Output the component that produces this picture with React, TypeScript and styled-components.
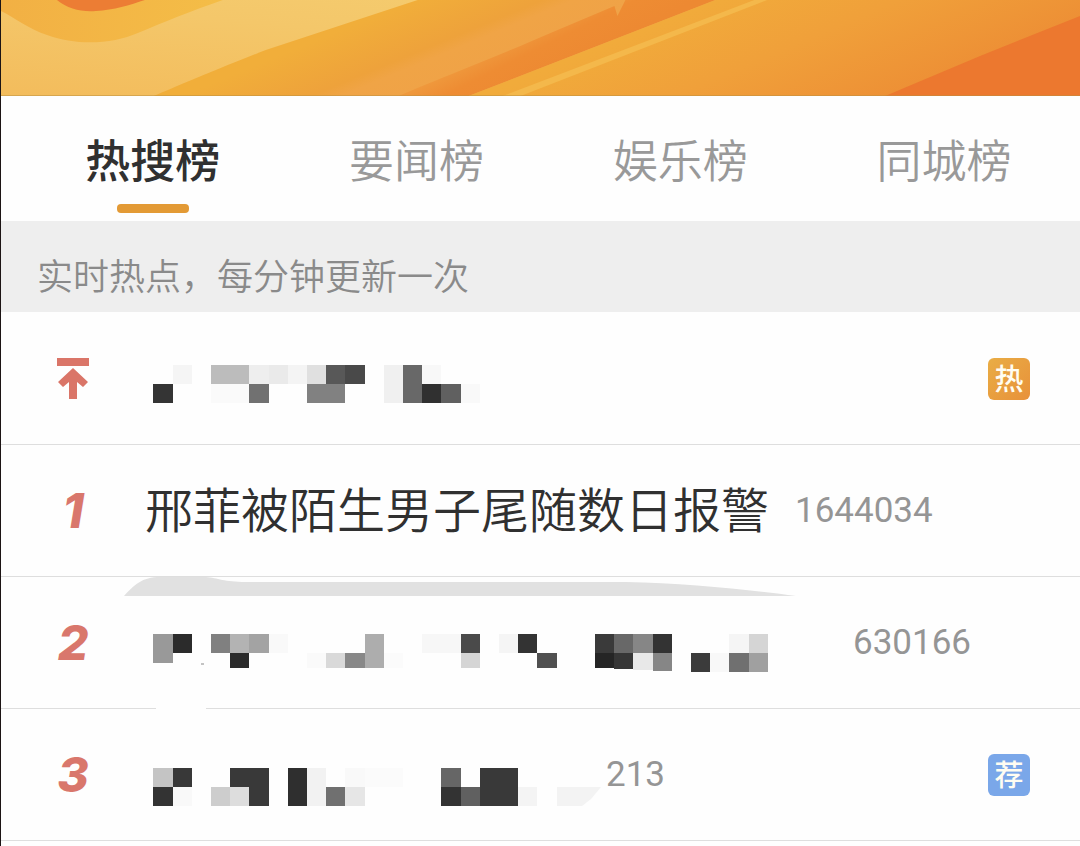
import React, { useState } from "react";
import styled, { createGlobalStyle } from "styled-components";

const GlobalStyle = createGlobalStyle`
  *, *::before, *::after { box-sizing: border-box; }
  body {
    margin: 0;
    background: #fefefe;
    font-family: Roboto, "Noto Sans CJK SC", sans-serif;
  }
`;

const Page = styled.main`
  min-height: 100vh;
  border-left: 1px solid #1c1414;
  overflow: hidden;
`;

const Banner = styled.svg`
  display: block;
  width: 100%;
  height: 96px;
`;

const TabBar = styled.nav`
  display: flex;
  height: 125px;
  padding: 0 4px 0 20px;
`;

const Tab = styled.button<{ $active: boolean }>`
  flex: 1;
  display: flex;
  flex-direction: column;
  align-items: center;
  gap: 12px;
  padding: 30px 0 0;
  border: 0;
  background: none;
  font-family: "Noto Sans CJK SC", sans-serif;
  font-size: 45px;
  line-height: 66px;
  font-weight: ${(p) => (p.$active ? 500 : 350)};
  color: ${(p) => (p.$active ? "#303030" : "#999999")};
  cursor: pointer;

  &::after {
    content: "";
    width: 72px;
    height: 9px;
    border-radius: 4px;
    background: ${(p) => (p.$active ? "#e39a35" : "transparent")};
  }
`;

const Notice = styled.p`
  margin: 0;
  padding: 26px 36px 11px;
  background: #eeeeee;
  color: #8a8a8a;
  font-family: "Noto Sans CJK SC", sans-serif;
  font-size: 36px;
  line-height: 54px;
  font-weight: 350;
`;

const List = styled.ol`
  margin: 0;
  padding: 0;
  list-style: none;
  border-bottom: 1px solid #dedede;
`;

const Row = styled.li`
  display: flex;
  align-items: center;
  height: 132px;
  padding-right: 50px;
  border-top: 1px solid #dedede;

  &:first-child { border-top-color: transparent; }
`;

const Rank = styled.span`
  flex: none;
  display: flex;
  justify-content: center;
  width: 144px;
  color: #d9776c;
  font-family: Inter, sans-serif;
  font-size: 48px;
  line-height: 56px;
  font-style: italic;
  font-weight: 800;
`;

const TopIcon = styled.svg`
  display: block;
  width: 32px;
  height: 41px;
`;

const Title = styled.a`
  display: block;
  padding-bottom: 8px;
  color: #303030;
  font-family: "Noto Sans CJK SC", sans-serif;
  font-size: 48px;
  line-height: 70px;
  font-weight: 350;
  text-decoration: none;
  white-space: nowrap;
`;

const Mosaic = styled.svg`
  display: block;
  height: 132px;
  overflow: visible;
`;

const Count = styled.span`
  margin-left: 26px;
  color: #959595;
  font-family: Roboto, sans-serif;
  font-size: 35px;
  line-height: 42px;
  font-weight: 400;
`;

const Badge = styled.span<{ $kind: "hot" | "pick" }>`
  flex: none;
  width: 42px;
  height: 42px;
  margin-left: auto;
  border-radius: 6px;
  background: ${(p) =>
    p.$kind === "hot" ? "linear-gradient(135deg, #e9ad45, #e8913a)" : "#7aa7e9"};
  color: #fffdf2;
  font-family: "Noto Sans CJK SC", sans-serif;
  font-size: 29px;
  line-height: 38px;
  font-weight: 500;
  text-align: center;
`;

type Cell = [col: number, row: number, shade: string, width?: number, height?: number];

const CELL = 19.2;

const pinnedCells: Cell[] = [
  [1, 0, "#f5f5f5"], [3, 0, "#bcbcbc", 2], [5, 0, "#eeeeee"], [6, 0, "#eaeaea"],
  [7, 0, "#f4f4f4"], [8, 0, "#e0e0e0"], [9, 0, "#585858"], [10, 0, "#494949"],
  [12, 0, "#f0f0f0", 1, 2], [13, 0, "#686868", 1, 2], [14, 0, "#f8f8f8"],
  [0, 1, "#343434"], [3, 1, "#fafafa", 2], [5, 1, "#717171"],
  [8, 1, "#818181", 2], [14, 1, "#303030"], [15, 1, "#606060"], [16, 1, "#f9f9f9"],
];

const secondCells: Cell[] = [
  [0, 0, "#999999", 1, 1.5], [1, 0, "#2b2b2b"], [3, 0, "#808080"], [4, 0, "#b3b3b3"],
  [5, 0, "#a3a3a3"], [6, 0, "#f9f9f9"], [11, 0, "#adadad", 1, 1.75],
  [14, 0, "#f7f7f7", 2], [16, 0, "#4a4a4a"], [18, 0, "#f5f5f5"], [19, 0, "#333333"],
  [23, 0, "#3a3a3a"], [24, 0, "#686868"], [25, 0, "#868686"], [26, 0, "#333333"],
  [30, 0, "#f5f5f5"], [31, 0, "#d5d5d5"],
  [4, 1, "#2b2b2b", 1, 0.75], [8, 1, "#fafafa", 1, 0.75], [9, 1, "#d9d9d9", 1, 0.75],
  [10, 1, "#888888", 1, 0.75], [12, 1, "#fbfbfb", 1, 0.75], [16, 1, "#d5d5d5", 1, 0.75],
  [20, 1, "#505050", 1, 0.75], [23, 1, "#252525", 1, 0.75], [24, 1, "#363636", 1, 0.8],
  [25, 1, "#e8e8e8", 1, 0.85], [26, 1, "#868686", 1, 0.92], [28, 1, "#3b3b3b"],
  [29, 1, "#f8f8f8"], [30, 1, "#707070"], [31, 1, "#a0a0a0"],
];

const thirdCells: Cell[] = [
  [0, 0, "#c4c4c4"], [1, 0, "#383838"], [4, 0, "#393939", 2], [7, 0, "#2f2f2f", 1, 2],
  [8, 0, "#f2f2f2", 1, 2], [10, 0, "#f9f9f9"], [11, 0, "#fbfbfb", 2],
  [15, 0, "#666666"], [17, 0, "#393939", 2, 2],
  [0, 1, "#333333"], [1, 1, "#f9f9f9"], [3, 1, "#cdcdcd"], [4, 1, "#dddddd"],
  [5, 1, "#393939"], [9, 1, "#707070"], [10, 1, "#e6e6e6"],
  [15, 1, "#333333"], [16, 1, "#606060"], [19, 1, "#f4f4f4"],
];

function Cells({ cells, top }: { cells: Cell[]; top: number }) {
  return (
    <g shapeRendering="crispEdges">
      {cells.map(([c, r, fill, w = 1, h = 1]) => (
        <rect key={`${c}-${r}`} x={8.4 + c * CELL} y={top + r * CELL} width={w * CELL} height={h * CELL} fill={fill} />
      ))}
    </g>
  );
}

function BannerArt() {
  return (
    <Banner viewBox="0 0 1080 96" preserveAspectRatio="none" aria-hidden="true">
      <defs>
        <linearGradient id="sand" x1="0" y1="1" x2="1" y2="0">
          <stop offset="0" stopColor="#f3bc5c" />
          <stop offset="0.5" stopColor="#f4c76a" />
          <stop offset="1" stopColor="#f5cf72" />
        </linearGradient>
        <linearGradient id="amber" gradientUnits="userSpaceOnUse" x1="340" y1="30" x2="385" y2="139">
          <stop offset="0" stopColor="#f1ae3a" />
          <stop offset="0.42" stopColor="#eea23b" />
          <stop offset="0.52" stopColor="#f0a446" />
          <stop offset="1" stopColor="#efa148" />
        </linearGradient>
        <linearGradient id="ember" gradientUnits="userSpaceOnUse" x1="495" y1="50" x2="515" y2="90">
          <stop offset="0" stopColor="#ef983c" />
          <stop offset="0.4" stopColor="#ee8c33" />
          <stop offset="1" stopColor="#ed8932" />
        </linearGradient>
        <linearGradient id="flame" gradientUnits="userSpaceOnUse" x1="660" y1="20" x2="780" y2="300">
          <stop offset="0" stopColor="#f1ab3b" />
          <stop offset="0.25" stopColor="#f0a03a" />
          <stop offset="0.55" stopColor="#ed8f35" />
          <stop offset="0.72" stopColor="#ef9738" />
          <stop offset="1" stopColor="#ee9438" />
        </linearGradient>
        <linearGradient id="ring" x1="0" y1="0" x2="1" y2="0">
          <stop offset="0" stopColor="#f2b044" />
          <stop offset="1" stopColor="#f4bd47" />
        </linearGradient>
      </defs>
      <rect width="1080" height="96" fill="url(#sand)" />
      <path d="M0 0H222C190 11 163 22 137 33C112 44 76 46 46 35C27 29 13 17 0 11Z" fill="url(#ring)" />
      <path d="M56 0C67 9 80 12 95 11C113 10 129 5 144 0Z" fill="#ec7d34" />
      <path d="M153 96C200 76 232 63 265 50L417 0H720L475 96Z" fill="url(#amber)" />
      <path d="M398 96C440 78 505 53 550 33L614 6L617 16L625 0H715L468 96Z" fill="url(#ember)" />
      <path d="M468 96L715 0H1080V96Z" fill="url(#flame)" />
      <path d="M502 96L754 0H767L520 96Z" fill="#f4b84b" />
      <path d="M885 96L980 56L1080 16V96Z" fill="#ec782f" />
      <rect y="95" width="1080" height="1" fill="#b99042" opacity="0.5" />
    </Banner>
  );
}

const tabs = ["热搜榜", "要闻榜", "娱乐榜", "同城榜"];

export default function App() {
  const [active, setActive] = useState(0);
  return (
    <>
      <GlobalStyle />
      <Page>
        <BannerArt />
        <TabBar>
          {tabs.map((label, i) => (
            <Tab key={label} type="button" $active={i === active} onClick={() => setActive(i)}>
              {label}
            </Tab>
          ))}
        </TabBar>
        <Notice>实时热点，每分钟更新一次</Notice>
        <List>
          <Row>
            <Rank>
              <TopIcon viewBox="0 0 32 41" aria-hidden="true">
                <path d="M0 0H32V8H0ZM16 10L31 24L26 29L20 24V41H12V24L6 29L1 24Z" fill="#da7568" />
              </TopIcon>
            </Rank>
            <Mosaic width="340" aria-hidden="true">
              <Cells cells={pinnedCells} top={52} />
            </Mosaic>
            <Badge $kind="hot">热</Badge>
          </Row>
          <Row>
            <Rank>1</Rank>
            <Title href="#1">邢菲被陌生男子尾随数日报警</Title>
            <Count>1644034</Count>
          </Row>
          <Row>
            <Rank>2</Rank>
            <Mosaic width="682" aria-hidden="true">
              <path d="M-21 19C-11 8 -3 0 15 0H61C73 1 79 5 101 5H481C541 6 605 13 651 19Z" fill="#e1e1e1" />
              <Cells cells={secondCells} top={57} />
              <path d="M56 87H59" stroke="#888888" />
            </Mosaic>
            <Count>630166</Count>
          </Row>
          <Row>
            <Rank>3</Rank>
            <Mosaic width="435" aria-hidden="true">
              <path d="M11 -1H61V2H11Z" fill="#fefefe" />
              <Cells cells={thirdCells} top={59} />
              <path d="M412 78H456L446 90L437 97H412Z" fill="#f3f3f3" />
            </Mosaic>
            <Count>213</Count>
            <Badge $kind="pick">荐</Badge>
          </Row>
        </List>
      </Page>
    </>
  );
}
